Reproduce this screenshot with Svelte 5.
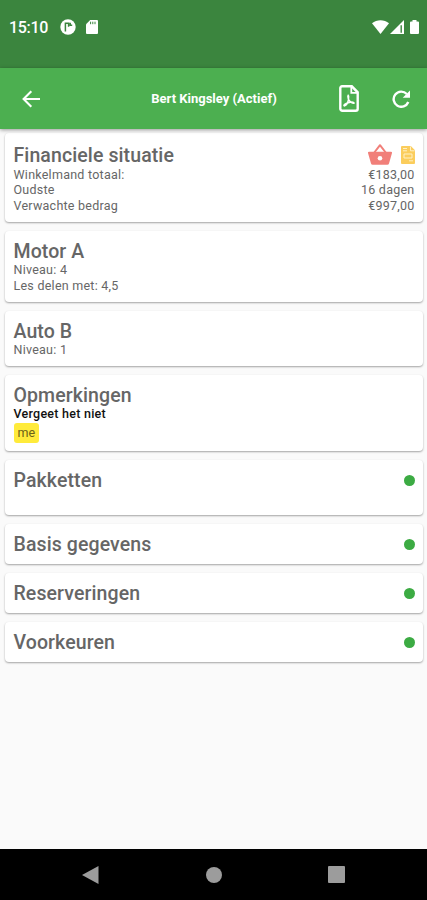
<script>
	const cart = [
		{ label: 'Winkelmand totaal:', value: '€183,00' },
		{ label: 'Oudste', value: '16 dagen' },
		{ label: 'Verwachte bedrag', value: '€997,00' }
	];

	const courses = [
		{ name: 'Motor A', lines: ['Niveau: 4', 'Les delen met: 4,5'] },
		{ name: 'Auto B', lines: ['Niveau: 1'] }
	];

	const sections = [
		{ name: 'Pakketten', tall: true },
		{ name: 'Basis gegevens' },
		{ name: 'Reserveringen' },
		{ name: 'Voorkeuren' }
	];
</script>

<div class="screen">
	<div class="status-bar">
		<span class="time">15:10</span>
		<svg class="app-icon" width="16" height="16" viewBox="0 0 16 16">
			<circle cx="8" cy="8" r="7.7" fill="#fff" />
			<path d="M5.4 12.5V4.2h3.200v3.600M10.200 3.800v2.400h2" fill="none" stroke="#3b853e" stroke-width="1.5" />
		</svg>
		<svg class="sd-icon" width="12" height="14" viewBox="0 0 12 14">
			<path d="M4.2 0H11a1 1 0 0 1 1 1v12a1 1 0 0 1-1 1H1a1 1 0 0 1-1-1V4.2z" fill="#fff" />
			<path d="M4.6 1.7v2.5M6.8 1.7v2.5M9 1.7v2.5" stroke="#3b853e" stroke-width="1" />
		</svg>
		<div class="signals">
			<svg width="17" height="14" viewBox="0 0 17 14">
				<path d="M0 3.3C4.8-.9 12.2-.9 17 3.3L8.5 14z" fill="#fff" />
			</svg>
			<svg width="14" height="14" viewBox="0 0 14 14">
				<path d="M14 0v14H0z" fill="#fff" />
				<path d="M11.2 5.2v7.6" stroke="#3b853e" stroke-width="1.4" />
			</svg>
			<svg class="battery" width="9" height="14" viewBox="0 0 9 14">
				<path d="M2.5 0h4v1.4H8a1 1 0 0 1 1 1V13a1 1 0 0 1-1 1H1a1 1 0 0 1-1-1V2.4a1 1 0 0 1 1-1h1.5z" fill="#fff" />
			</svg>
		</div>
	</div>

	<header class="toolbar">
		<button class="back" aria-label="Terug">
			<svg width="18" height="18" viewBox="0 0 18 18">
				<path d="M18 9H1.7M9.3 1.3L1.6 9l7.7 7.7" fill="none" stroke="#fff" stroke-width="2.1" />
			</svg>
		</button>
		<h1>Bert Kingsley (Actief)</h1>
		<button class="pdf" aria-label="PDF">
			<svg width="20" height="27" viewBox="0 0 20 27">
				<path d="M3 1.3h9.8l5.9 6v16.4a2 2 0 0 1-2 2H3.3a2 2 0 0 1-2-2V3A1.7 1.7 0 0 1 3 1.3z" fill="none" stroke="#fff" stroke-width="2.4" />
				<path d="M12.3 1.5v6.3h6.2" fill="none" stroke="#fff" stroke-width="1.8" />
				<path d="M9.2 10.3c-1 1.2.3 3 .3 4.5-.6 2.5-2.4 5.9-4.2 6.1-1.3-.7 1-2.5 4-3.2 2.500-.8 5.400-.8 5.800.3-.9 1.100-4-.8-5.500-3.300-.5-1.500.8-3.400-.4-4.400z" fill="none" stroke="#fff" stroke-width="1.5" />
			</svg>
		</button>
		<button class="refresh" aria-label="Vernieuwen">
			<svg width="18" height="18" viewBox="0 0 18 18">
				<path d="M16.3 12A7.6 7.6 0 1 1 14.8 4" fill="none" stroke="#fff" stroke-width="2.4" />
				<path d="M18 .5v7.3h-7.3z" fill="#fff" />
			</svg>
		</button>
	</header>

	<main>
		<section class="card">
			<div class="card-header finance">
				<h2>Financiele situatie</h2>
				<svg class="basket" width="24" height="21" viewBox="0 0 24 21">
					<path d="M6.3 8.5L12 1.2l5.7 7.3" fill="none" stroke="#f17f79" stroke-width="2" stroke-linejoin="round" />
					<path d="M1 7.8h22a1 1 0 0 1 1 1.3l-3 10.3a1.8 1.8 0 0 1-1.7 1.4H4.7A1.8 1.8 0 0 1 3 19.4L0 9.1a1 1 0 0 1 1-1.3z" fill="#f17f79" />
					<circle cx="12" cy="14.3" r="2.3" fill="#fff" />
				</svg>
				<svg class="note" width="14" height="18" viewBox="0 0 14 18">
					<path d="M1 0h8.8L14 4.2V17a1 1 0 0 1-1 1H1a1 1 0 0 1-1-1V1a1 1 0 0 1 1-1z" fill="#fbcd5c" />
					<path d="M2 2.5h4M2 4.8h4M9.5.5v4.3h4M3 8h8v4H3zM8 14.8h4" fill="none" stroke="#fff0c4" stroke-width="1" />
				</svg>
			</div>
			{#each cart as row}
				<div class="row">
					<span>{row.label}</span>
					<span>{row.value}</span>
				</div>
			{/each}
		</section>

		{#each courses as course}
			<section class="card">
				<div class="card-header">
					<h2>{course.name}</h2>
				</div>
				{#each course.lines as line}
					<div class="row">{line}</div>
				{/each}
			</section>
		{/each}

		<section class="card remarks">
			<div class="card-header">
				<h2>Opmerkingen</h2>
			</div>
			<div class="row remark">Vergeet het niet</div>
			<span class="chip">me</span>
		</section>

		{#each sections as section}
			<section class="card" class:tall={section.tall}>
				<div class="card-header">
					<h2>{section.name}</h2>
					<span class="dot"></span>
				</div>
			</section>
		{/each}
	</main>

	<nav>
		<svg width="17" height="18" viewBox="0 0 17 18"><path d="M0 9L16.5 0v18z" fill="#9c9c9c" /></svg>
		<svg width="16" height="16" viewBox="0 0 16 16"><circle cx="8" cy="8" r="8" fill="#9c9c9c" /></svg>
		<svg width="17" height="17" viewBox="0 0 17 17"><rect width="17" height="17" rx="1" fill="#9c9c9c" /></svg>
	</nav>
</div>

<style>
	:global(body) {
		margin: 0;
	}
	.screen {
		display: flex;
		flex-direction: column;
		height: 900px;
		background: #fafafa;
		font-family: Roboto, 'Liberation Sans', sans-serif;
		color: #666;
		overflow: hidden;
	}
	.status-bar {
		display: flex;
		align-items: center;
		box-sizing: border-box;
		height: 68px;
		padding: 0 8px 14px 9px;
		background: #3b853e;
		color: #fff;
	}
	.time {
		width: 51px;
		font-size: 16px;
		font-weight: 500;
		letter-spacing: -0.3px;
		line-height: 20px;
		padding-top: 2px;
	}
	.sd-icon {
		margin-left: 10px;
	}
	.signals {
		display: flex;
		gap: 1px;
		margin-left: auto;
	}
	.battery {
		margin-left: 5px;
	}
	.toolbar {
		display: grid;
		grid-template-columns: 62px 1fr 52px 52px;
		align-items: center;
		height: 61px;
		background: #4caf50;
		color: #fff;
		box-shadow: 0 1px 4px rgba(0, 0, 0, 0.4);
		z-index: 1;
	}
	.toolbar button {
		display: flex;
		justify-content: center;
		padding: 0;
		border: none;
		background: none;
	}
	h1 {
		margin: 0;
		padding-left: 43px;
		text-align: center;
		font-size: 13px;
		font-weight: 700;
		white-space: nowrap;
	}
	main {
		display: flex;
		flex-direction: column;
		flex: 1;
		gap: 9px;
		padding: 4px 4px 0 5px;
	}
	.card {
		box-sizing: border-box;
		padding: 8px 8.5px 9px;
		background: #fff;
		border-radius: 4px;
		box-shadow: 0 1px 2px rgba(0, 0, 0, 0.35);
	}
	.card-header {
		display: flex;
		align-items: center;
		height: 23px;
	}
	.finance {
		height: 26px;
	}
	.finance .note {
		margin: 2px 0 0 9px;
	}
	h2 {
		flex: 1;
		margin: 0;
		padding-top: 2px;
		font-size: 19.5px;
		font-weight: 500;
		line-height: 23px;
		letter-spacing: 0.1px;
		color: #666;
	}
	.row {
		display: flex;
		justify-content: space-between;
		font-size: 12.5px;
		line-height: 15.4px;
		letter-spacing: 0.25px;
	}
	.remarks {
		height: 76px;
	}
	.remark {
		font-weight: 500;
		color: #111;
	}
	.chip {
		display: inline-block;
		padding: 0 4px;
		border-radius: 3px;
		background: #ffeb3b;
		color: #6a6218;
		font-size: 12.5px;
		line-height: 20px;
	}
	.tall {
		height: 55px;
	}
	.dot {
		width: 11px;
		height: 11px;
		margin-top: 1px;
		border-radius: 50%;
		background: #3cab43;
	}
	nav {
		display: flex;
		align-items: center;
		justify-content: space-between;
		box-sizing: border-box;
		height: 51px;
		padding: 0 82px;
		background: #000;
	}
</style>
